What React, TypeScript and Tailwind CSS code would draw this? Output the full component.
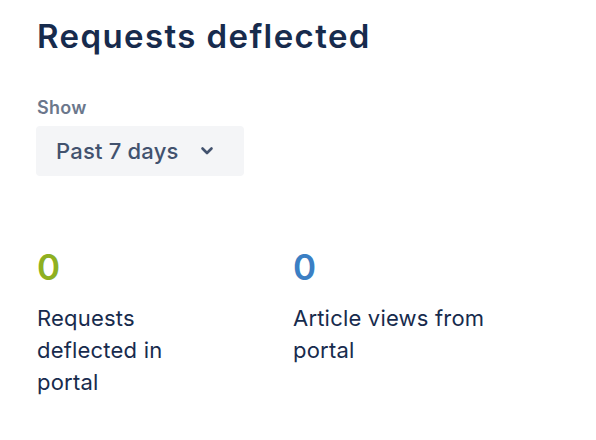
import React from "react";

export default function App() {
  return (
    <div className="w-[596px] h-[440px] bg-white pl-[37px] pt-[18px]" style={{ fontFamily: "Inter, 'Noto Sans', sans-serif" }}>
      <h1 className="text-[33px] leading-[36px] font-semibold text-[#172b4d] tracking-[1.4px]">Requests deflected</h1>
      <div className="mt-[42px] text-[18px] leading-[24px] font-semibold text-[#6b778c] tracking-[0.3px]">Show</div>
      <button className="mt-[6px] -ml-px w-[208px] h-[50px] rounded-[4px] bg-[#f4f5f7] flex items-center pl-[20px] text-[22px] font-medium text-[#42526e] tracking-[0.2px]">
        <span>Past 7 days</span>
        <svg className="ml-[21px]" width="14" height="14" viewBox="0 0 14 14" fill="none">
          <path d="M2.5 4.5 L7 9 L11.5 4.5" stroke="#42526e" strokeWidth="2.6" strokeLinecap="round" strokeLinejoin="round" />
        </svg>
      </button>
      <div className="mt-[71px] flex">
        <div className="w-[256px]">
          <div className="text-[35px] leading-[40px] font-semibold text-[#8eb021]">0</div>
          <div className="mt-[15px] max-w-[170px] text-[22px] leading-[32px] text-[#172b4d] tracking-[0.2px]">Requests deflected in portal</div>
        </div>
        <div className="w-[240px]">
          <div className="text-[35px] leading-[40px] font-semibold text-[#3b7fc4]">0</div>
          <div className="mt-[15px] text-[22px] leading-[32px] text-[#172b4d] tracking-[0.2px]">Article views from portal</div>
        </div>
      </div>
    </div>
  );
}
